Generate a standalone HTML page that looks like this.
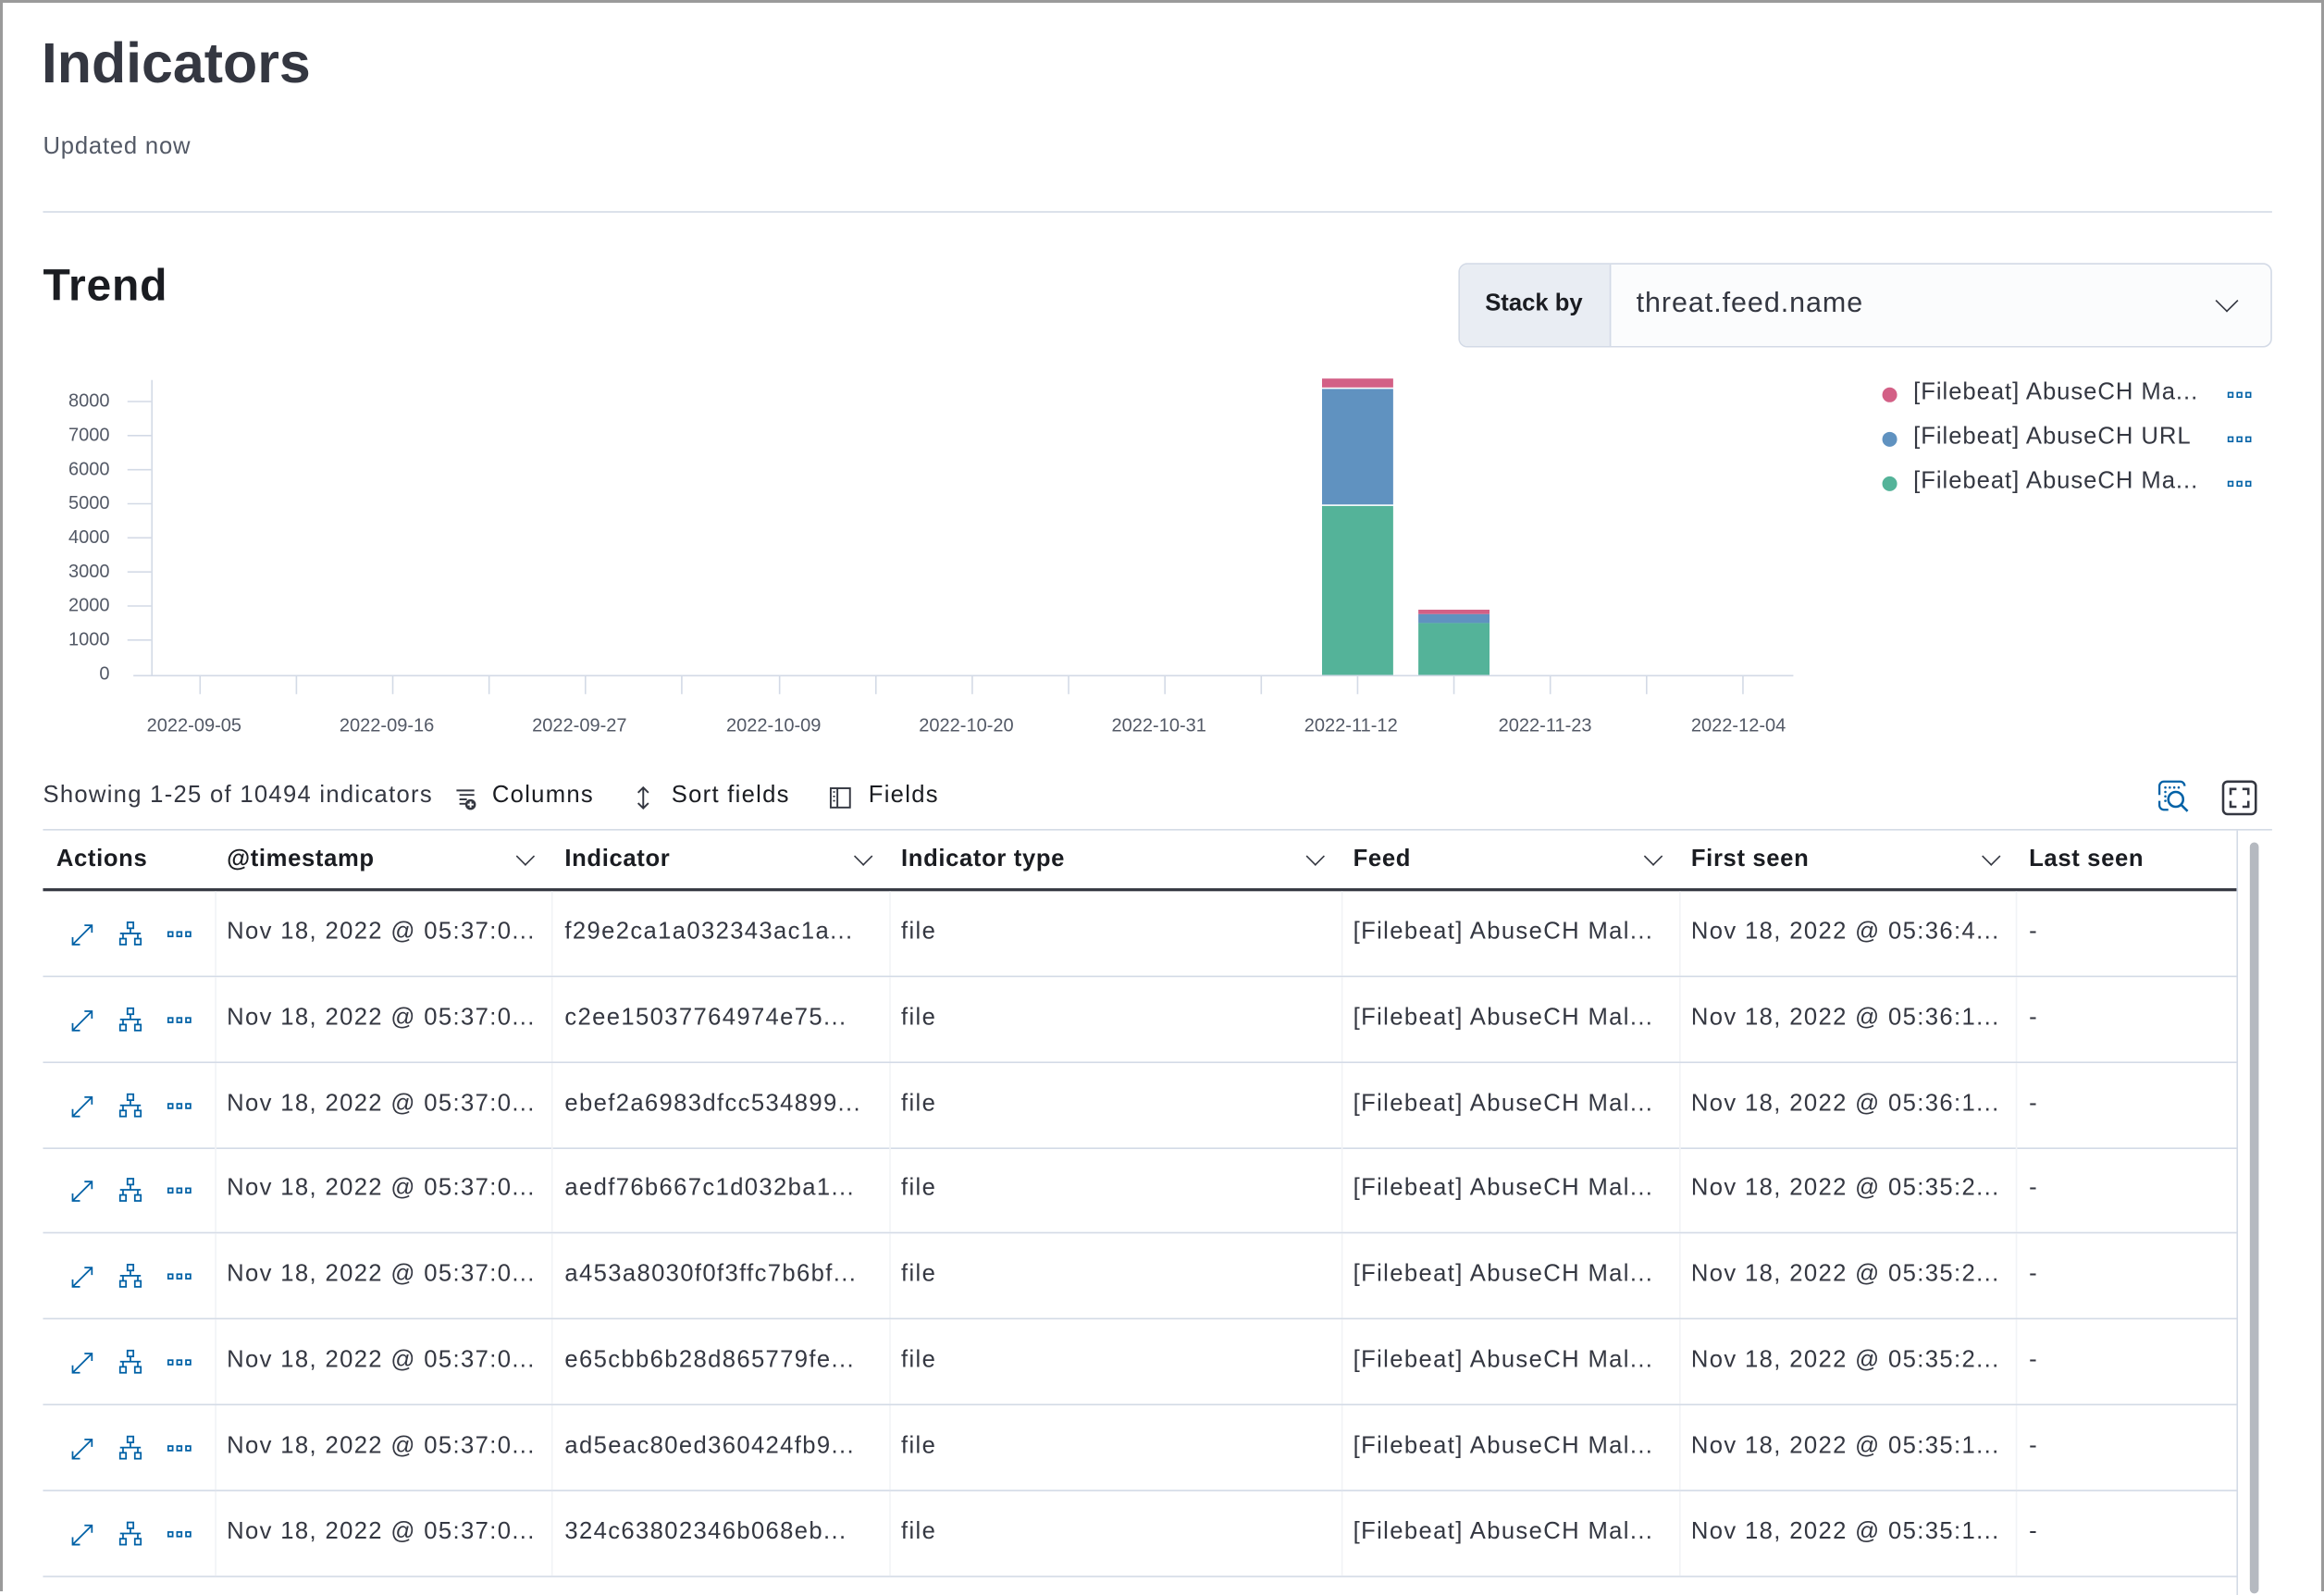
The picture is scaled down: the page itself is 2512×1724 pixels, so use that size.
<!DOCTYPE html>
<html><head><meta charset="utf-8"><style>
*{margin:0;padding:0;box-sizing:border-box}
html,body{width:2512px;height:1720px;overflow:hidden;background:#fff}
#b{position:absolute;left:0;top:0;width:2512px;height:1720px;border:3px solid #9a9a9a;border-bottom:none;z-index:5}
#w{position:absolute;left:0;top:4px;width:1568px;height:1074px;transform:scale(1.602,1.6015);transform-origin:0 0;font-family:"Liberation Sans",sans-serif;color:#343741}
.a{position:absolute;white-space:nowrap}
.yl{font-size:12.5px;color:#535966;right:1494px;text-align:right}
.xl{font-size:12.5px;color:#535966}
.th{font-size:16px;font-weight:bold;color:#1a1c21;top:569px;letter-spacing:.4px}
.td{font-size:16px;color:#343741;letter-spacing:.85px}
.ls{letter-spacing:.8px}
.chev{width:9px;height:9px;border-right:1.6px solid #343741;border-bottom:1.6px solid #343741;transform:rotate(45deg)}
</style></head><body><div id="b"></div><div id="w">
<div class="a" style="left:28px;top:20px;font-size:38px;font-weight:bold;color:#343741">Indicators</div>
<div class="a ls" style="left:29px;top:88px;font-size:16px;color:#535966;letter-spacing:.5px">Updated now</div>
<div class="a" style="left:29px;top:140px;width:1504px;height:1px;background:#d3dae6"></div>
<div class="a" style="left:29px;top:174px;font-size:30px;font-weight:bold;color:#1a1c21;letter-spacing:.5px">Trend</div>
<div class="a" style="left:984px;top:175px;width:549px;height:57px;border:1px solid #d3dae6;border-radius:6px;background:#fbfcfd;overflow:hidden">
 <div class="a" style="left:0;top:0;width:102px;height:57px;background:#e9edf3;border-right:1px solid #d3dae6"></div>
 <div class="a" style="left:17px;top:18px;font-size:16px;font-weight:bold;color:#1a1c21">Stack by</div>
 <div class="a" style="left:119px;top:16px;font-size:19px;color:#343741;letter-spacing:.6px">threat.feed.name</div>
 <div class="a chev" style="left:512px;top:19px;width:11px;height:11px"></div>
</div>
<div class="a yl" style="top:261px">8000</div><div class="a yl" style="top:284px">7000</div><div class="a yl" style="top:307px">6000</div><div class="a yl" style="top:330px">5000</div><div class="a yl" style="top:353px">4000</div><div class="a yl" style="top:376px">3000</div><div class="a yl" style="top:399px">2000</div><div class="a yl" style="top:422px">1000</div><div class="a yl" style="top:445px">0</div>
<svg class="a" style="left:0;top:0" width="1568" height="520">
<g stroke="#d3dae6" stroke-width="1">
<line x1="102.5" y1="254" x2="102.5" y2="453"/>
<line x1="90" y1="453.5" x2="1210" y2="453.5"/>
<line x1="86" y1="268.5" x2="102" y2="268.5"/><line x1="86" y1="291.5" x2="102" y2="291.5"/><line x1="86" y1="314.5" x2="102" y2="314.5"/><line x1="86" y1="337.5" x2="102" y2="337.5"/><line x1="86" y1="360.5" x2="102" y2="360.5"/><line x1="86" y1="383.5" x2="102" y2="383.5"/><line x1="86" y1="406.5" x2="102" y2="406.5"/><line x1="86" y1="429.5" x2="102" y2="429.5"/>
<line x1="135" y1="453" x2="135" y2="466"/><line x1="200" y1="453" x2="200" y2="466"/><line x1="265" y1="453" x2="265" y2="466"/><line x1="330" y1="453" x2="330" y2="466"/><line x1="395" y1="453" x2="395" y2="466"/><line x1="460" y1="453" x2="460" y2="466"/><line x1="526" y1="453" x2="526" y2="466"/><line x1="591" y1="453" x2="591" y2="466"/><line x1="656" y1="453" x2="656" y2="466"/><line x1="721" y1="453" x2="721" y2="466"/><line x1="786" y1="453" x2="786" y2="466"/><line x1="851" y1="453" x2="851" y2="466"/><line x1="916" y1="453" x2="916" y2="466"/><line x1="981" y1="453" x2="981" y2="466"/><line x1="1046" y1="453" x2="1046" y2="466"/><line x1="1111" y1="453" x2="1111" y2="466"/><line x1="1176" y1="453" x2="1176" y2="466"/>
</g>
<rect x="892" y="253" width="48" height="6" fill="#d36086"/>
<rect x="892" y="260" width="48" height="78" fill="#6092c0"/>
<rect x="892" y="339" width="48" height="114" fill="#54b399"/>
<rect x="957" y="409" width="48" height="3" fill="#d36086"/>
<rect x="957" y="412" width="48" height="6" fill="#6092c0"/>
<rect x="957" y="418" width="48" height="35" fill="#54b399"/>
</svg>
<div class="a xl" style="left:99px;top:480px">2022-09-05</div><div class="a xl" style="left:229px;top:480px">2022-09-16</div><div class="a xl" style="left:359px;top:480px">2022-09-27</div><div class="a xl" style="left:490px;top:480px">2022-10-09</div><div class="a xl" style="left:620px;top:480px">2022-10-20</div><div class="a xl" style="left:750px;top:480px">2022-10-31</div><div class="a xl" style="left:880px;top:480px">2022-11-12</div><div class="a xl" style="left:1011px;top:480px">2022-11-23</div><div class="a xl" style="left:1141px;top:480px">2022-12-04</div>
<div class="a" style="left:1270px;top:259px;width:10px;height:10px;border-radius:50%;background:#d36086"></div>
<div class="a" style="left:1270px;top:289px;width:10px;height:10px;border-radius:50%;background:#6092c0"></div>
<div class="a" style="left:1270px;top:319px;width:10px;height:10px;border-radius:50%;background:#54b399"></div>
<div class="a ls" style="left:1291px;top:254px;font-size:16px;letter-spacing:.6px">[Filebeat] AbuseCH Ma...</div>
<div class="a ls" style="left:1291px;top:284px;font-size:16px;letter-spacing:.6px">[Filebeat] AbuseCH URL</div>
<div class="a ls" style="left:1291px;top:314px;font-size:16px;letter-spacing:.6px">[Filebeat] AbuseCH Ma...</div>
<svg class="a" style="left:1502px;top:259px" width="20" height="70"><g fill="none" stroke="#0061a6" stroke-width="1"><rect x="1.5" y="3.5" width="3" height="3"/><rect x="7.5" y="3.5" width="3" height="3"/><rect x="13.5" y="3.5" width="3" height="3"/><rect x="1.5" y="33.5" width="3" height="3"/><rect x="7.5" y="33.5" width="3" height="3"/><rect x="13.5" y="33.5" width="3" height="3"/><rect x="1.5" y="63.5" width="3" height="3"/><rect x="7.5" y="63.5" width="3" height="3"/><rect x="13.5" y="63.5" width="3" height="3"/></g></svg>
<div class="a ls" style="left:29px;top:526px;font-size:16px">Showing 1-25 of 10494 indicators</div>
<svg class="a" style="left:306px;top:529px" width="16" height="16"><g stroke="#343741" stroke-width="1.2"><line x1="2" y1="2" x2="14" y2="2"/><line x1="4" y1="5" x2="14" y2="5"/><line x1="4" y1="8" x2="9" y2="8"/><line x1="4" y1="11" x2="8" y2="11"/></g><circle cx="11.5" cy="11.5" r="3.6" fill="#343741"/><path d="M11.5 9.5v4M9.5 11.5h4" stroke="#fff" stroke-width="1.2"/></svg>
<div class="a ls" style="left:332px;top:526px;font-size:16px;color:#1a1c21">Columns</div>
<svg class="a" style="left:427px;top:528px" width="14" height="16"><path d="M7 1v14M3.5 4.5L7 1l3.5 3.5M3.5 11.5L7 15l3.5-3.5" fill="none" stroke="#343741" stroke-width="1.2"/></svg>
<div class="a ls" style="left:453px;top:526px;font-size:16px;color:#1a1c21">Sort fields</div>
<svg class="a" style="left:559px;top:528px" width="16" height="16"><rect x="1.5" y="1.5" width="13" height="13" fill="none" stroke="#343741" stroke-width="1.2"/><line x1="6" y1="1.5" x2="6" y2="14.5" stroke="#343741" stroke-width="1.2"/><path d="M3 4h1.5M3 7h1.5M3 10h1.5" stroke="#343741"/></svg>
<div class="a ls" style="left:586px;top:526px;font-size:16px;color:#1a1c21">Fields</div>
<svg class="a" style="left:1454px;top:523px" width="26" height="26"><path d="M3 11V5a3 3 0 0 1 3-3h11a3 3 0 0 1 3 3" fill="none" stroke="#0061a6" stroke-width="1.4"/><path d="M3 15v3a3 3 0 0 0 3 3h3" fill="none" stroke="#0061a6" stroke-width="1.4"/><g fill="#0061a6"><circle cx="7" cy="6" r=".8"/><circle cx="10" cy="6" r=".8"/><circle cx="13" cy="6" r=".8"/><circle cx="16" cy="6" r=".8"/><circle cx="7" cy="9" r=".8"/><circle cx="7" cy="12" r=".8"/><circle cx="7" cy="15" r=".8"/></g><circle cx="14" cy="14" r="5" fill="none" stroke="#0061a6" stroke-width="1.6"/><line x1="17.5" y1="17.5" x2="22" y2="22" stroke="#0061a6" stroke-width="1.6"/></svg>
<svg class="a" style="left:1499px;top:524px" width="24" height="24"><rect x="1" y="1" width="22" height="22" rx="3" fill="none" stroke="#343741" stroke-width="1.6"/><path d="M6 10V6h4M14 6h4v4M18 14v4h-4M10 18H6v-4" fill="none" stroke="#343741" stroke-width="1.6"/></svg>
<div class="a" style="left:29px;top:557px;width:1504px;height:1px;background:#d3dae6"></div>
<div class="a th" style="left:38px">Actions</div>
<div class="a th" style="left:153px">@timestamp</div>
<div class="a th" style="left:381px">Indicator</div>
<div class="a th" style="left:608px">Indicator type</div>
<div class="a th" style="left:913px">Feed</div>
<div class="a th" style="left:1141px">First seen</div>
<div class="a th" style="left:1369px">Last seen</div>
<div class="a chev" style="left:350px;top:571px"></div><div class="a chev" style="left:578px;top:571px"></div><div class="a chev" style="left:883px;top:571px"></div><div class="a chev" style="left:1111px;top:571px"></div><div class="a chev" style="left:1339px;top:571px"></div>
<div class="a" style="left:29px;top:597px;width:1481px;height:2px;background:#343741"></div>
<div class="a" style="left:1509px;top:558px;width:1px;height:516px;background:#d3dae6"></div>
<div class="a" style="left:1518px;top:566px;width:6px;height:507px;border-radius:3px;background:#b5b9c0"></div>
</div>
<script>
var ind=["f29e2ca1a032343ac1a...","c2ee15037764974e75...","ebef2a6983dfcc534899...","aedf76b667c1d032ba1...","a453a8030f0f3ffc7b6bf...","e65cbb6b28d865779fe...","ad5eac80ed360424fb9...","324c63802346b068eb..."];
var fs=["05:36:4...","05:36:1...","05:36:1...","05:35:2...","05:35:2...","05:35:2...","05:35:1...","05:35:1..."];
var h="",w=document.getElementById('w');
for(var i=0;i<8;i++){var t=599+i*57.8,c=t+29;
h+='<div class="a" style="left:29px;top:'+(t+57)+'px;width:1481px;height:1px;background:#d3dae6"></div>';
[145,372,600,905,1133,1360].forEach(function(x){h+='<div class="a" style="left:'+x+'px;top:'+t+'px;width:1px;height:57px;background:#f1f3f6"></div>'});
h+='<svg class="a" style="left:46px;top:'+(c-10)+'px" width="90" height="20"><g fill="none" stroke="#0061a6" stroke-width="1.1"><path d="M3 17L16 4M3 12v5h5M11 4h5v5"/><rect x="40" y="2" width="4" height="4"/><path d="M42 6v3M35 9.5h14M37 10v3M47 10v3"/><rect x="35" y="13" width="4" height="4"/><rect x="45" y="13" width="4" height="4"/><rect x="67.5" y="8.5" width="3" height="3"/><rect x="73.5" y="8.5" width="3" height="3"/><rect x="79.5" y="8.5" width="3" height="3"/></g></svg>';
var y=c-10;
h+='<div class="a td" style="left:153px;top:'+y+'px">Nov 18, 2022 @ 05:37:0...</div>';
h+='<div class="a td" style="left:381px;top:'+y+'px">'+ind[i]+'</div>';
h+='<div class="a td" style="left:608px;top:'+y+'px">file</div>';
h+='<div class="a td" style="left:913px;top:'+y+'px">[Filebeat] AbuseCH Mal...</div>';
h+='<div class="a td" style="left:1141px;top:'+y+'px">Nov 18, 2022 @ '+fs[i]+'</div>';
h+='<div class="a td" style="left:1369px;top:'+y+'px">-</div>';}
w.insertAdjacentHTML('beforeend',h);
</script>
</body></html>
